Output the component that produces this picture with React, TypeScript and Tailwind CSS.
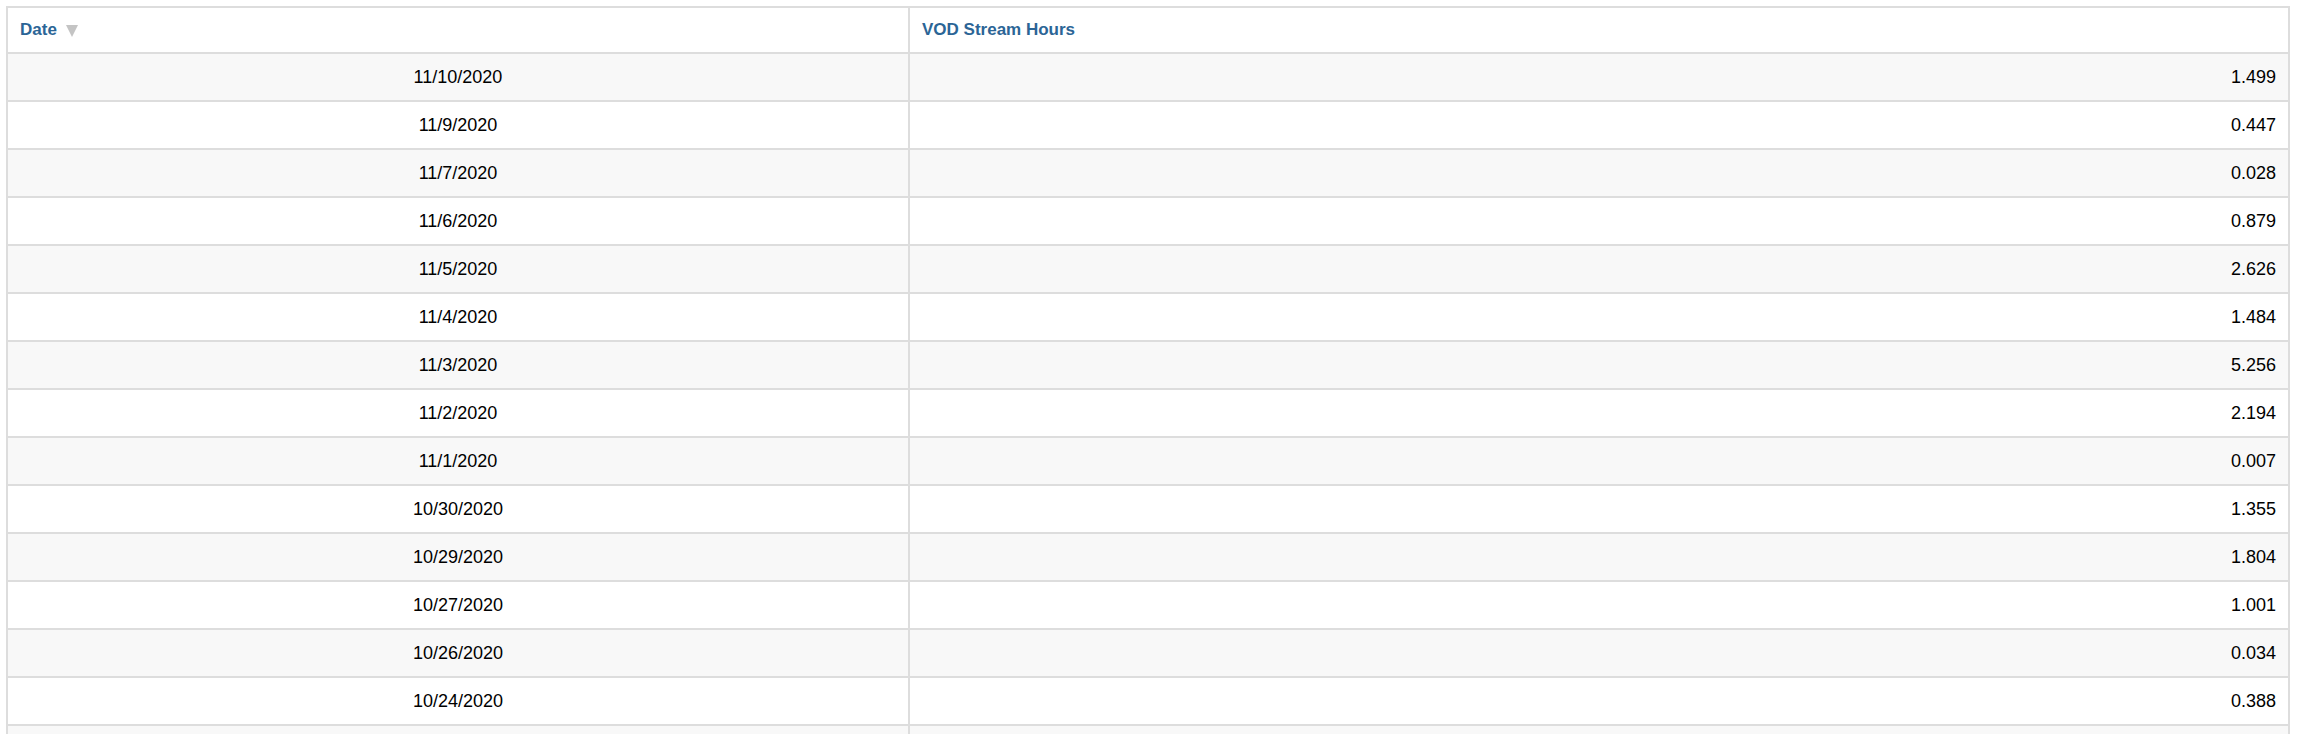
const rows: [string, string][] = [
  ["11/10/2020", "1.499"],
  ["11/9/2020", "0.447"],
  ["11/7/2020", "0.028"],
  ["11/6/2020", "0.879"],
  ["11/5/2020", "2.626"],
  ["11/4/2020", "1.484"],
  ["11/3/2020", "5.256"],
  ["11/2/2020", "2.194"],
  ["11/1/2020", "0.007"],
  ["10/30/2020", "1.355"],
  ["10/29/2020", "1.804"],
  ["10/27/2020", "1.001"],
  ["10/26/2020", "0.034"],
  ["10/24/2020", "0.388"],
  ["10/23/2020", "0.512"],
]

export default function App() {
  return (
    <div className="min-h-screen bg-white pt-[6px] pl-[6px] font-['Liberation_Sans',Arial,sans-serif]">
      <div className="w-[2284px] border-2 border-[#dddddd]">
        {/* Header */}
        <div className="flex h-[46px] border-b-2 border-[#dddddd] text-[17px] font-bold text-[#2b6596]">
          <div className="flex w-[902px] items-center gap-[9px] border-r-2 border-[#dddddd] px-3">
            <span>Date</span>
            <svg width="12" height="12" viewBox="0 0 12 12" className="mt-[1px]">
              <polygon points="0,0 12,0 6,12" fill="#c4c4c4" />
            </svg>
          </div>
          <div className="flex flex-1 items-center px-3">VOD Stream Hours</div>
        </div>

        {/* Rows */}
        {rows.map(([date, hours], i) => (
          <div
            key={date}
            className={`flex h-[48px] border-b-2 border-[#dddddd] text-[18px] text-black ${
              i % 2 === 0 ? "bg-[#f8f8f8]" : "bg-white"
            }`}
          >
            <div className="flex w-[902px] items-center justify-center border-r-2 border-[#dddddd] px-3">
              {date}
            </div>
            <div className="flex flex-1 items-center justify-end px-3">{hours}</div>
          </div>
        ))}
      </div>
    </div>
  )
}
